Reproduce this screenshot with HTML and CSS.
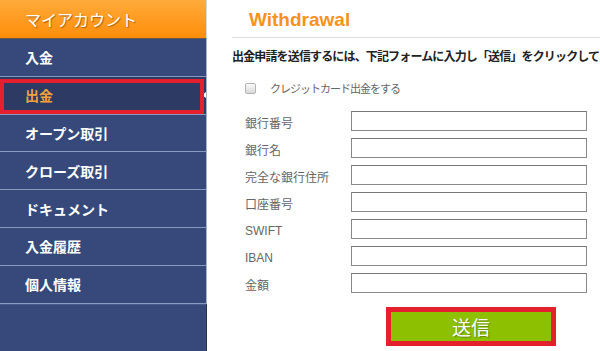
FILE: index.html
```html
<!DOCTYPE html>
<html lang="ja">
<head>
<meta charset="utf-8">
<title>Withdrawal</title>
<link rel="stylesheet" href="styles.css">
</head>
<body>
<div class="page">
  <aside class="sidebar">
    <div class="side-head">マイアカウント</div>
    <ul class="menu">
      <li class="item">入金</li>
      <li class="item active">出金</li>
      <li class="item">オープン取引</li>
      <li class="item">クローズ取引</li>
      <li class="item">ドキュメント</li>
      <li class="item">入金履歴</li>
      <li class="item">個人情報</li>
    </ul>
    <div class="filler"></div>
  </aside>
  <main class="main">
    <div class="title-bar"><h1 class="title">Withdrawal</h1></div>
    <p class="intro">出金申請を送信するには、下記フォームに入力し「送信」をクリックして</p>
    <label class="check-row"><input type="checkbox" class="check"><span class="check-label">クレジットカード出金をする</span></label>
    <div class="form">
      <span class="lbl">銀行番号</span><input class="field" type="text">
      <span class="lbl">銀行名</span><input class="field" type="text">
      <span class="lbl">完全な銀行住所</span><input class="field" type="text">
      <span class="lbl">口座番号</span><input class="field" type="text">
      <span class="lbl">SWIFT</span><input class="field" type="text">
      <span class="lbl">IBAN</span><input class="field" type="text">
      <span class="lbl">金額</span><input class="field" type="text">
    </div>
    <button class="submit" type="button">送信</button>
  </main>
</div>
</body>
</html>
```
FILE: styles.css
```css
* { box-sizing: border-box; }
html, body { margin: 0; padding: 0; background: #fff; }
body {
  font-family: "Liberation Sans", "Noto Sans CJK JP", sans-serif;
  width: 600px;
  height: 351px;
  overflow: hidden;
}
.page {
  display: flex;
  height: 351px;
}
.sidebar {
  width: 207px;
  flex: none;
  display: flex;
  flex-direction: column;
  background: #36497a;
}
.side-head {
  height: 39px;
  padding-left: 25px;
  display: flex;
  align-items: center;
  font-size: 16px;
  color: #fff;
  text-shadow: 1px 1px 1px rgba(120, 60, 0, 0.6);
  background: linear-gradient(#ffab3a, #ff8d0a);
  border-bottom: 1px solid #6b5a48;
  border-right: 1px solid #d8d8d8;
}
.menu {
  list-style: none;
  margin: 0;
  padding: 0;
}
.item {
  position: relative;
  height: 37.8px;
  padding-left: 25px;
  display: flex;
  align-items: center;
  font-size: 14px;
  font-weight: bold;
  color: #fff;
  border-bottom: 1px solid #8a99bd;
  border-right: 1px solid #aab3c8;
}
.item.active {
  background: #2c3a64;
  color: #f2a23a;
}
.item.active::before {
  content: "";
  position: absolute;
  right: 0;
  top: 50%;
  margin-top: -3px;
  border-right: 4px solid #fff;
  border-top: 3px solid transparent;
  border-bottom: 3px solid transparent;
}
.item.active::after {
  content: "";
  position: absolute;
  left: 0;
  right: 2px;
  top: 2px;
  bottom: 0;
  border: 4px solid #e3202b;
}
.filler {
  flex: 1;
  border-right: 1px solid #26324f;
  border-top: 1px solid #4a5c88;
}
.main {
  flex: 1;
  min-width: 0;
  overflow: hidden;
  padding-left: 25px;
}
.title-bar {
  padding: 9px 0 6px 17px;
  border-bottom: 1px solid #dcdcdc;
}
.title {
  margin: 0;
  font-size: 19px;
  line-height: 22px;
  font-weight: bold;
  color: #f7921e;
}
.intro {
  margin: 11px 0 0;
  font-size: 12px;
  line-height: 16px;
  letter-spacing: -0.85px;
  font-weight: bold;
  color: #222;
  white-space: nowrap;
}
.check-row {
  display: flex;
  align-items: center;
  margin-top: 16px;
  height: 14px;
  padding-left: 13px;
}
.check {
  appearance: none;
  -webkit-appearance: none;
  width: 11px;
  height: 11px;
  margin: 0;
  border: 1px solid #b4b4b4;
  border-radius: 2px;
  background: linear-gradient(#fafafa, #d8d8d8);
}
.check-label {
  margin-left: 14px;
  font-size: 11px;
  letter-spacing: -1px;
  color: #666;
}
.form {
  margin-top: 16px;
  margin-left: 13px;
  display: grid;
  grid-template-columns: 106px 236px;
  grid-auto-rows: 20px;
  row-gap: 7px;
}
.lbl {
  font-size: 12px;
  color: #666;
  align-self: center;
  padding-top: 3px;
}
.field {
  width: 236px;
  height: 20px;
  margin: 0;
  border: 1px solid #8a8a8a;
  border-top-color: #777;
  border-left-color: #888;
  background: #fff;
  padding: 0 3px;
}
.submit {
  display: block;
  margin: 19px 0 0 159px;
  width: 160px;
  height: 29px;
  border: none;
  background: #8cc000;
  color: #fff;
  font-family: "Noto Sans CJK JP", sans-serif;
  font-size: 19px;
  line-height: 29px;
  padding: 0;
  text-shadow: 1px 1px 1px rgba(60, 80, 0, 0.5);
  outline: 5px solid #e3202b;
}
```
